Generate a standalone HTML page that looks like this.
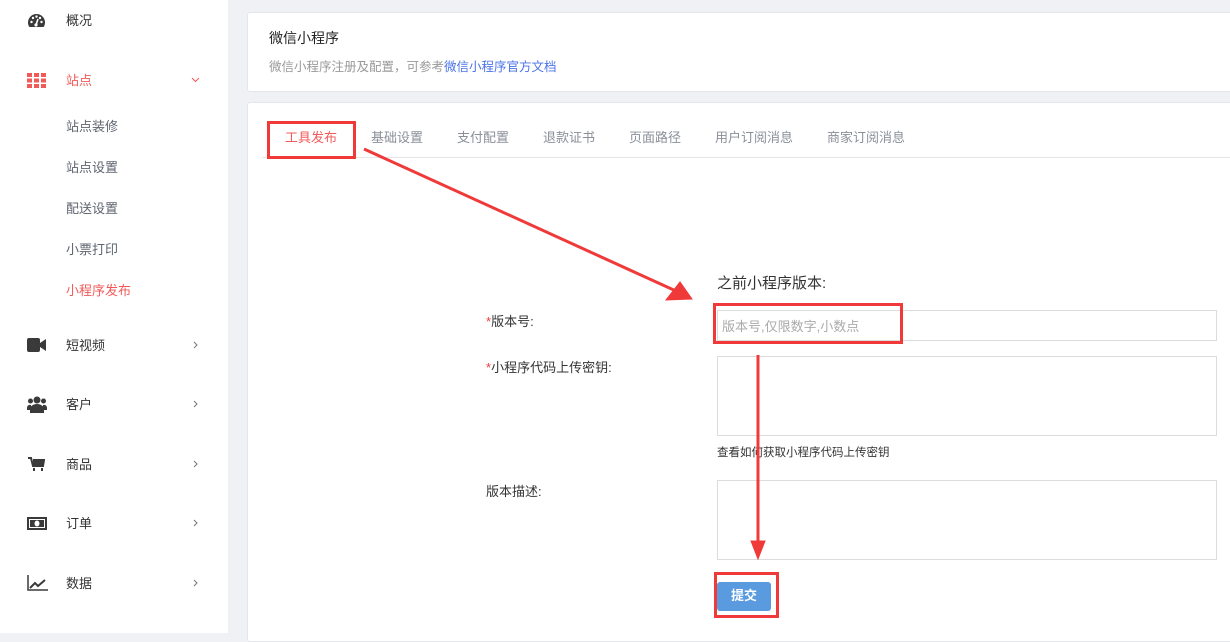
<!DOCTYPE html>
<html><head><meta charset="utf-8"><style>
*{margin:0;padding:0;box-sizing:border-box}
body{width:1230px;height:633px;overflow:hidden;background:#f0f1f5;font-family:"Liberation Sans","Noto Sans CJK SC",sans-serif;font-size:13px;position:relative}
.a{position:absolute;white-space:nowrap}
.t{margin-top:-2px}
#side{position:absolute;left:0;top:0;width:228px;height:633px;background:#fff}
.m{color:#333;font-size:13px}
.s{color:#5e6470}
.card{position:absolute;background:#fff;border:1px solid #e4e6eb;border-radius:3px}
.tab{position:absolute;top:127px;color:#8a8f99;font-size:13px}
.lab{color:#333;font-size:13px}
.box{position:absolute;border:1px solid #dcdcdc;background:#fff}
.red{position:absolute;border:3px solid #f03a3a}
</style></head><body>
<div id="side">
 <svg class="a" style="left:27px;top:13px" width="19" height="16" viewBox="0 0 19 16"><path d="M9.5 1A8.5 8.5 0 0 0 1 9.5c0 2 .6 3.6 1.5 4.5h14c.9-.9 1.5-2.5 1.5-4.5A8.5 8.5 0 0 0 9.5 1z" fill="#3a3a3a"/><circle cx="4.5" cy="9" r="1.2" fill="#fff"/><circle cx="6" cy="5" r="1.2" fill="#fff"/><circle cx="9.5" cy="3.6" r="1.2" fill="#fff"/><circle cx="14.5" cy="9" r="1.2" fill="#fff"/><circle cx="13" cy="5" r="1.2" fill="#fff"/><path d="M9 12l2-6" stroke="#fff" stroke-width="1.6"/><circle cx="9" cy="12" r="1.6" fill="#fff"/></svg>
 <div class="a m" style="left:66px;top:10px">概况</div>
 <svg class="a" style="left:27px;top:73px" width="19" height="15"><g fill="#f25a5a"><rect x="0" y="0" width="5" height="4"/><rect x="7" y="0" width="5" height="4"/><rect x="14" y="0" width="5" height="4"/><rect x="0" y="5.5" width="5" height="4"/><rect x="7" y="5.5" width="5" height="4"/><rect x="14" y="5.5" width="5" height="4"/><rect x="0" y="11" width="5" height="4"/><rect x="7" y="11" width="5" height="4"/><rect x="14" y="11" width="5" height="4"/></g></svg>
 <div class="a m" style="left:66px;top:70px;color:#f25a5a">站点</div>
 <svg class="a" style="left:191px;top:77px" width="9" height="6"><path d="M1 1l3.5 3.5L8 1" stroke="#f25a5a" fill="none"/></svg>
 <div class="a s" style="left:66px;top:116px">站点装修</div>
 <div class="a s" style="left:66px;top:157px">站点设置</div>
 <div class="a s" style="left:66px;top:198px">配送设置</div>
 <div class="a s" style="left:66px;top:239px">小票打印</div>
 <div class="a s" style="left:66px;top:280px;color:#f25a5a">小程序发布</div>
 <svg class="a" style="left:27px;top:338px" width="20" height="14"><rect x="0" y="0" width="13" height="14" rx="2" fill="#3a3a3a"/><path d="M13 5l6-4v12l-6-4z" fill="#3a3a3a"/></svg>
 <div class="a m" style="left:66px;top:335px">短视频</div>
 <svg class="a" style="left:193px;top:341px" width="5" height="8"><path d="M1 1l3 3-3 3" stroke="#777" fill="none"/></svg>
 <svg class="a" style="left:27px;top:396px" width="20" height="17" fill="#3a3a3a"><circle cx="10" cy="4" r="3.5"/><circle cx="3.5" cy="5" r="2.5"/><circle cx="16.5" cy="5" r="2.5"/><path d="M3 17v-4a7 5 0 0 1 14 0v4z"/><path d="M0 12a3 3 0 0 1 4-3v5H0z"/><path d="M20 12a3 3 0 0 0-4-3v5h4z"/></svg>
 <div class="a m" style="left:66px;top:394px">客户</div>
 <svg class="a" style="left:193px;top:400px" width="5" height="8"><path d="M1 1l3 3-3 3" stroke="#777" fill="none"/></svg>
 <svg class="a" style="left:28px;top:457px" width="17" height="15"><path d="M0 1h3l2 8h10l1-6H5" fill="none" stroke="#3a3a3a" stroke-width="2"/><rect x="5" y="3" width="11" height="5" fill="#3a3a3a"/><rect x="5" y="11" width="2" height="3" fill="#3a3a3a"/><rect x="13" y="11" width="2" height="3" fill="#3a3a3a"/></svg>
 <div class="a m" style="left:66px;top:454px">商品</div>
 <svg class="a" style="left:193px;top:460px" width="5" height="8"><path d="M1 1l3 3-3 3" stroke="#777" fill="none"/></svg>
 <svg class="a" style="left:27px;top:517px" width="20" height="13"><rect x="1" y="1" width="18" height="11" fill="none" stroke="#3a3a3a" stroke-width="2"/><rect x="3" y="3" width="14" height="7" fill="#3a3a3a"/><ellipse cx="10" cy="6.5" rx="2.5" ry="3" fill="#fff"/></svg>
 <div class="a m" style="left:66px;top:513px">订单</div>
 <svg class="a" style="left:193px;top:519px" width="5" height="8"><path d="M1 1l3 3-3 3" stroke="#777" fill="none"/></svg>
 <svg class="a" style="left:27px;top:575px" width="21" height="16"><path d="M1 0v15h20" stroke="#3a3a3a" stroke-width="1.5" fill="none"/><path d="M3 13l5-5 3 3 7-6" stroke="#3a3a3a" stroke-width="2" fill="none"/></svg>
 <div class="a m" style="left:66px;top:573px">数据</div>
 <svg class="a" style="left:193px;top:579px" width="5" height="8"><path d="M1 1l3 3-3 3" stroke="#777" fill="none"/></svg>
</div>
<div class="card" style="left:247px;top:12px;width:990px;height:80px"></div>
<div class="a" style="left:269px;top:28px;font-size:14px;color:#222">微信小程序</div>
<div class="a" style="left:269px;top:56px;font-size:12.5px;color:#999">微信小程序注册及配置，可参考<span style="color:#4a73e8">微信小程序官方文档</span></div>
<div class="card" style="left:247px;top:102px;width:990px;height:540px"></div>
<div class="a" style="left:262px;top:157px;width:968px;height:1px;background:#e6e6e6"></div>
<div class="tab" style="left:285px;color:#f25a5a">工具发布</div>
<div class="tab" style="left:371px">基础设置</div>
<div class="tab" style="left:457px">支付配置</div>
<div class="tab" style="left:543px">退款证书</div>
<div class="tab" style="left:629px">页面路径</div>
<div class="tab" style="left:715px">用户订阅消息</div>
<div class="tab" style="left:827px">商家订阅消息</div>
<div class="red" style="left:267px;top:121px;width:89px;height:38px"></div>
<div class="a" style="left:717px;top:272px;font-size:15px;color:#333">之前小程序版本:</div>
<div class="a lab" style="left:486px;top:311px"><span style="color:#f03a3a">*</span>版本号:</div>
<div class="a lab" style="left:486px;top:357px"><span style="color:#f03a3a">*</span>小程序代码上传密钥:</div>
<div class="a lab" style="left:486px;top:481px">版本描述:</div>
<div class="box" style="left:717px;top:310px;width:500px;height:31px"></div>
<div class="a" style="left:722px;top:316px;color:#aaa;font-size:13px">版本号,仅限数字,小数点</div>
<div class="red" style="left:713px;top:303px;width:190px;height:41px"></div>
<div class="box" style="left:717px;top:356px;width:500px;height:80px"></div>
<div class="a" style="left:717px;top:444px;font-size:11.5px;color:#333">查看如何获取小程序代码上传密钥</div>
<div class="box" style="left:717px;top:480px;width:500px;height:80px"></div>
<div class="a" style="left:717px;top:582px;width:54px;height:29px;background:#5a9be0;border-radius:3px;color:#fff;font-size:13px;text-align:center;line-height:27px;font-weight:bold">提交</div>
<div class="red" style="left:714px;top:572px;width:65px;height:46px"></div>
<svg class="a" style="left:0;top:0" width="1230" height="633"><g fill="#f03a3a" stroke="#f03a3a"><path d="M364 149L676 291" stroke-width="3"/><path d="M692 299L666 300L680 282Z"/><path d="M758 355L758 545" stroke-width="3"/><path d="M751 541L765 541L758 559Z"/></g></svg>
</body></html>
